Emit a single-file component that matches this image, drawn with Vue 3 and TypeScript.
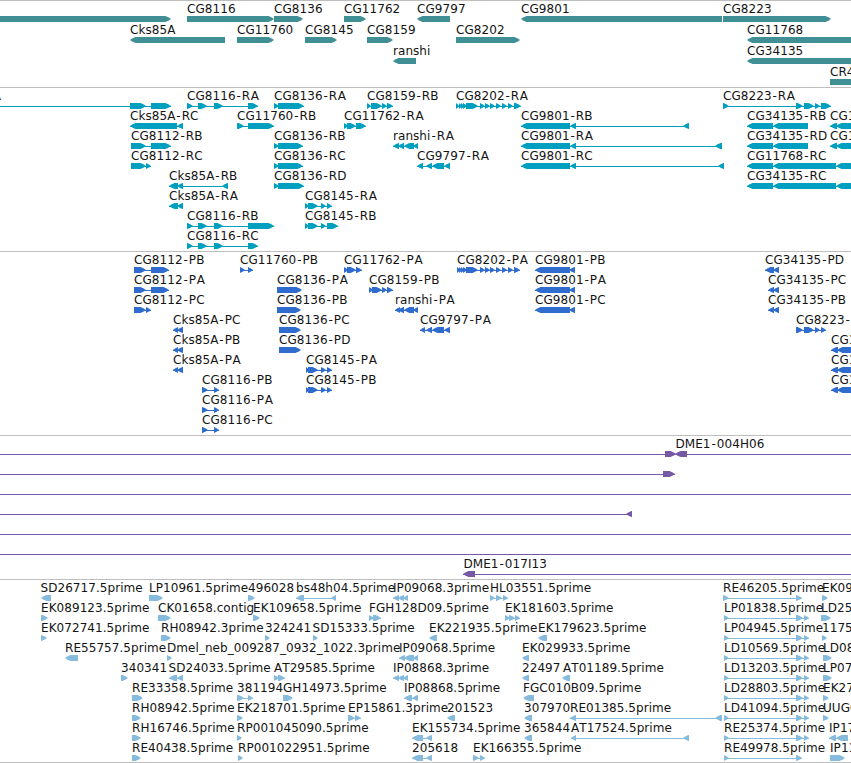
<template>
  <main class="browser">
    <section v-for="track in tracks" :key="track.name" class="track">
      <svg
        class="lane"
        :class="track.name"
        :width="viewWidth"
        :height="track.height"
        :viewBox="`0 0 ${viewWidth} ${track.height}`"
      >
        <g
          v-for="(row, r) in track.rows"
          :key="r"
          :transform="`translate(0 ${r * track.pitch})`"
        >
          <g v-for="(feature, i) in row" :key="i">
            <rect
              v-if="feature.blocks.length > 1"
              :x="feature.blocks[0][0]"
              y="18"
              :width="spanOf(feature)"
              height="1"
            />
            <path :d="outline(feature)" />
            <text
              v-if="feature.label"
              :x="feature.labelX ?? feature.blocks[0][0]"
              y="12"
              :dx="spacing(feature.label)"
            >{{ feature.label }}</text>
          </g>
        </g>
      </svg>
    </section>
  </main>
</template>

<script setup lang="ts">
type Block = [number, number]
type Strand = '+' | '-'

interface Feature {
  label: string
  strand: Strand
  blocks: Block[]
  labelX?: number
}

interface Track {
  name: string
  pitch: number
  height: number
  rows: Feature[][]
}

const viewWidth = 851

function f(label: string, strand: Strand, blocks: Block[], labelX?: number): Feature {
  return { label, strand, blocks, labelX }
}

function spanOf(feature: Feature): number {
  return feature.blocks[feature.blocks.length - 1][1] - feature.blocks[0][0]
}

// loosen the hyphen and the RA / PA pairs
function spacing(label: string): string {
  return [...label]
    .map((ch, i) => {
      const prev = label[i - 1]
      if (i === 0) return 0
      if (ch === '-' || prev === '-') return 1
      if (ch === 'A' && (prev === 'R' || prev === 'P')) return 0.6
      return 0.05
    })
    .join(' ')
}

// every block ends in an arrow head pointing along its strand
function outline(feature: Feature): string {
  return feature.blocks
    .map(([start, end]) => {
      const dir = feature.strand === '+' ? 1 : -1
      const head = dir === 1 ? end : start
      const tail = dir === 1 ? start : end
      const tip = Math.min(5.5, end - start)
      return (
        `M${tail} 15H${head - dir * tip}L${head - dir * tip * 0.4} 16.5` +
        `L${head} 18.1L${head - dir * tip * 0.4} 19.6L${head - dir * tip} 21H${tail}Z`
      )
    })
    .join('')
}

// exon sets shared by several transcripts
const cg8116: Block[] = [[187, 193], [198, 207], [214, 223], [248, 258]]
const cg8202: Block[] = [
  [459, 462], [461, 464], [463, 467], [466, 478], [480, 485], [485, 490],
  [490, 495], [496, 501], [502, 507], [508, 513]
]
const cg8112p: Block[] = [[134, 146], [151, 169]]
const cg9801p: Block[] = [[535, 570], [569, 575]]
const cks85Ap: Block[] = [[173, 178], [177, 183]]
const cg8116p: Block[] = [[202, 208], [214, 219]]
const cg8145p: Block[] = [[306, 309], [308, 318], [321, 326], [327, 332]]
const cg34135: Block[] = [[747, 773], [773, 808]]
const cg34135Long: Block[] = [[747, 773], [773, 836], [836, 870]]
const edge: Block[] = [[830, 837], [836, 870]]
const edgeP: Block[] = [[831, 838], [837, 870]]
const est8223: Block[] = [[724, 729], [796, 803], [804, 809]]
const est8868: Block[] = [[393, 399], [398, 404], [403, 408]]
const wholeView: Block[] = [[-20, -10], [870, 880]]

const tracks: Track[] = [
  {
    name: 'genes',
    pitch: 21,
    height: 86,
    rows: [
      [
        f('', '+', [[-10, 171]]),
        f('CG8116', '+', [[187, 274]]),
        f('CG8136', '+', [[274, 303]]),
        f('CG11762', '+', [[344, 366]]),
        f('CG9797', '-', [[417, 450]]),
        f('CG9801', '-', [[521, 722]]),
        f('CG8223', '+', [[723, 831]])
      ],
      [
        f('Cks85A', '-', [[130, 225]]),
        f('CG11760', '+', [[237, 274]]),
        f('CG8145', '+', [[305, 337]]),
        f('CG8159', '+', [[367, 393]]),
        f('CG8202', '+', [[456, 520]]),
        f('CG11768', '-', [[747, 900]])
      ],
      [f('ranshi', '-', [[393, 416]]), f('CG34135', '-', [[747, 900]])],
      [f('CR4', '+', [[830, 900]])]
    ]
  },
  {
    name: 'transcripts',
    pitch: 20,
    height: 163,
    rows: [
      [
        f('CG8112-RA', '+', [[-70, -60], [130, 146], [151, 171]], -71),
        f('CG8116-RA', '+', cg8116),
        f('CG8136-RA', '+', [[274, 279], [278, 304]]),
        f('CG8159-RB', '+', [[367, 371], [371, 382], [382, 387], [387, 393]]),
        f('CG8202-RA', '+', [[456, 459], ...cg8202, [514, 521]]),
        f('CG8223-RA', '+', [[723, 729], [796, 803], [804, 814], [815, 820], [821, 831]])
      ],
      [
        f('Cks85A-RC', '-', [[130, 177], [177, 183]]),
        f('CG11760-RB', '+', [[237, 244], [248, 274]]),
        f('CG11762-RA', '+', [[344, 348], [347, 356], [356, 366]]),
        f('CG9801-RB', '-', [[521, 570], [570, 576], [683, 689]]),
        f('CG34135-RB', '-', cg34135),
        f('CG11768-RB', '-', edge)
      ],
      [
        f('CG8112-RB', '+', [[131, 146], [151, 171]]),
        f('CG8136-RB', '+', [[274, 279], [278, 303]]),
        f('ranshi-RA', '-', [[393, 399], [398, 404], [404, 414], [413, 418]]),
        f('CG9801-RA', '-', [[521, 570], [570, 576], [715, 722]]),
        f('CG34135-RD', '-', cg34135),
        f('CG11768-RA', '-', edge)
      ],
      [
        f('CG8112-RC', '+', [[131, 146], [146, 151]]),
        f('CG8136-RC', '+', [[274, 279], [278, 303]]),
        f('CG9797-RA', '-', [[417, 423], [426, 432], [432, 444], [444, 450]]),
        f('CG9801-RC', '-', [[521, 570], [570, 576], [718, 724]]),
        f('CG11768-RC', '-', cg34135Long)
      ],
      [
        f('Cks85A-RB', '-', [[169, 178], [177, 183], [222, 228]]),
        f('CG8136-RD', '+', [[274, 279], [278, 304]]),
        f('CG34135-RC', '-', cg34135Long)
      ],
      [
        f('Cks85A-RA', '-', [[169, 178], [177, 183]]),
        f('CG8145-RA', '+', [[305, 309], [308, 318], [321, 326], [327, 332]])
      ],
      [
        f('CG8116-RB', '+', [[187, 193], [198, 207], [214, 223], [248, 274]]),
        f('CG8145-RB', '+', [[305, 309], [308, 318], [321, 326], [327, 338]])
      ],
      [f('CG8116-RC', '+', cg8116)]
    ]
  },
  {
    name: 'proteins',
    pitch: 20,
    height: 183,
    rows: [
      [
        f('CG8112-PB', '+', cg8112p),
        f('CG11760-PB', '+', [[240, 245], [248, 253]]),
        f('CG11762-PA', '+', [[344, 348], [347, 356], [356, 362]]),
        f('CG8202-PA', '+', [[457, 460], ...cg8202, [514, 520]]),
        f('CG9801-PB', '-', cg9801p),
        f('CG34135-PD', '-', [[765, 774], [773, 779]])
      ],
      [
        f('CG8112-PA', '+', cg8112p),
        f('CG8136-PA', '+', [[277, 302]]),
        f('CG8159-PB', '+', [[369, 373], [372, 382], [382, 387], [387, 393]]),
        f('CG9801-PA', '-', cg9801p),
        f('CG34135-PC', '-', [[768, 774], [773, 779]])
      ],
      [
        f('CG8112-PC', '+', [[134, 146], [146, 151]]),
        f('CG8136-PB', '+', [[277, 301]]),
        f('ranshi-PA', '-', [[395, 400], [398, 404], [404, 414], [413, 418]]),
        f('CG9801-PC', '-', cg9801p),
        f('CG34135-PB', '-', [[768, 774], [773, 779]])
      ],
      [
        f('Cks85A-PC', '-', cks85Ap),
        f('CG8136-PC', '+', [[279, 301]]),
        f('CG9797-PA', '-', [[420, 425], [426, 432], [432, 444], [444, 450]]),
        f('CG8223-PA', '+', [[796, 803], [804, 814], [815, 820], [821, 826]])
      ],
      [
        f('Cks85A-PB', '-', cks85Ap),
        f('CG8136-PD', '+', [[279, 301]]),
        f('CG11768-PC', '-', edgeP)
      ],
      [
        f('Cks85A-PA', '-', cks85Ap),
        f('CG8145-PA', '+', cg8145p),
        f('CG11768-PB', '-', edgeP)
      ],
      [
        f('CG8116-PB', '+', cg8116p),
        f('CG8145-PB', '+', cg8145p),
        f('CG11768-PA', '-', edgeP)
      ],
      [f('CG8116-PA', '+', cg8116p)],
      [f('CG8116-PC', '+', cg8116p)]
    ]
  },
  {
    name: 'clones',
    pitch: 20,
    height: 143,
    rows: [
      [
        f('', '+', [[-20, -10], [665, 676]]),
        f('DME1-004H06', '-', [[675, 687], [870, 880]], 675.5)
      ],
      [f('', '+', [[-20, -10], [663, 675]])],
      [f('', '+', wholeView)],
      [f('', '-', [[-20, -10], [626, 632]])],
      [f('', '+', wholeView)],
      [f('', '+', wholeView)],
      [f('DME1-017I13', '-', [[463, 475], [870, 880]], 463.5)]
    ]
  },
  {
    name: 'ests',
    pitch: 20,
    height: 182,
    rows: [
      [
        f('SD26717.5prime', '-', [[41, 51]], 40.5),
        f('LP10961.5prime', '+', [[149, 163]]),
        f('496028', '+', [[248, 255]]),
        f('bs48h04.5prime', '-', [[296, 304], [331, 336]]),
        f('IP09068.3prime', '-', est8868),
        f('HL03551.5prime', '+', [[490, 495], [496, 502], [503, 508]]),
        f('RE46205.5prime', '+', [[723, 729], [796, 802]]),
        f('EK09', '+', [[822, 828]])
      ],
      [
        f('EK089123.5prime', '+', [[41, 48]]),
        f('CK01658.contig', '+', [[158, 171]]),
        f('EK109658.5prime', '+', [[253, 260]]),
        f('FGH128D09.5prime', '+', [[369, 374], [373, 381]]),
        f('EK181603.5prime', '+', [[505, 510], [509, 515], [515, 520]]),
        f('LP01838.5prime', '+', est8223),
        f('LD25', '+', [[821, 831]])
      ],
      [
        f('EK072741.5prime', '+', [[41, 47]]),
        f('RH08942.3prime', '+', [[161, 171]]),
        f('324241', '+', [[265, 270]]),
        f('SD15333.5prime', '+', [[313, 318]], 312.5),
        f('EK221935.5prime', '-', [[429, 437]]),
        f('EK179623.5prime', '-', [[538, 547]]),
        f('LP04945.5prime', '+', est8223),
        f('1175', '+', [[822, 827]])
      ],
      [
        f('RE55757.5prime', '-', [[65, 78]]),
        f('Dmel_neb_009287_0932_1022.3prime', '+', [[167, 172]]),
        f('IP09068.5prime', '-', [[399, 405], [404, 414], [413, 418]]),
        f('EK029933.5prime', '-', [[522, 529]]),
        f('LD10569.5prime', '+', est8223),
        f('LD08', '+', [[823, 832]])
      ],
      [
        f('340341', '+', [[121, 128]]),
        f('SD24033.5prime', '-', [[169, 177], [177, 183]], 168.5),
        f('AT29585.5prime', '+', [[274, 279], [278, 285]]),
        f('IP08868.3prime', '-', est8868),
        f('22497', '-', [[522, 529]]),
        f('AT01189.5prime', '-', [[562, 570]], 563),
        f('LD13203.5prime', '+', est8223),
        f('LP07', '+', [[823, 832]])
      ],
      [
        f('RE33358.5prime', '+', [[132, 143]]),
        f('381194', '+', [[237, 244], [248, 253]]),
        f('GH14973.5prime', '+', [[283, 293]]),
        f('IP08868.5prime', '-', [[404, 412], [412, 418]]),
        f('FGC010B09.5prime', '-', [[523, 534]]),
        f('LD28803.5prime', '+', est8223),
        f('EK27', '+', [[823, 829]])
      ],
      [
        f('RH08942.5prime', '+', [[132, 141]]),
        f('EK218701.5prime', '+', [[237, 243]]),
        f('EP15861.3prime', '+', [[348, 355], [355, 361]]),
        f('201523', '-', [[447, 455]]),
        f('307970', '-', [[524, 532]]),
        f('RE01385.5prime', '-', [[570, 576], [715, 722]]),
        f('LD41094.5prime', '+', est8223),
        f('UUGC', '+', [[823, 829]])
      ],
      [
        f('RH16746.5prime', '+', [[132, 141]]),
        f('RP001045090.5prime', '+', [[237, 242]]),
        f('EK155734.5prime', '-', [[412, 423], [426, 432]]),
        f('365844', '-', [[524, 532]]),
        f('AT17524.5prime', '-', [[571, 576], [683, 689]]),
        f('RE25374.5prime', '+', est8223),
        f('IP17', '-', [[829, 836], [836, 848]])
      ],
      [
        f('RE40438.5prime', '+', [[132, 141]]),
        f('RP001022951.5prime', '+', [[238, 243]]),
        f('205618', '-', [[412, 423], [426, 432]]),
        f('EK166355.5prime', '+', [[473, 479], [480, 485]]),
        f('RE49978.5prime', '+', [[724, 729], [796, 802]]),
        f('IP11', '+', [[830, 845]])
      ]
    ]
  }
]
</script>

<style>
body {
  margin: 0;
  background: #ffffff;
}
</style>

<style scoped>
.browser {
  width: 851px;
  box-sizing: border-box;
  overflow: hidden;
  border-bottom: 1px solid #bebebe;
}

.track {
  border-top: 1px solid #bebebe;
}

.lane {
  display: block;
}

.lane text {
  font-family: 'DejaVu Sans', sans-serif;
  font-size: 12px;
  font-kerning: none;
  fill: #141414;
}

.genes {
  fill: #3f8f94;
}

.transcripts {
  fill: #009fc0;
}

.proteins {
  fill: #306ccd;
}

.clones {
  fill: #7758a7;
}

.ests {
  fill: #86bbdd;
}
</style>
